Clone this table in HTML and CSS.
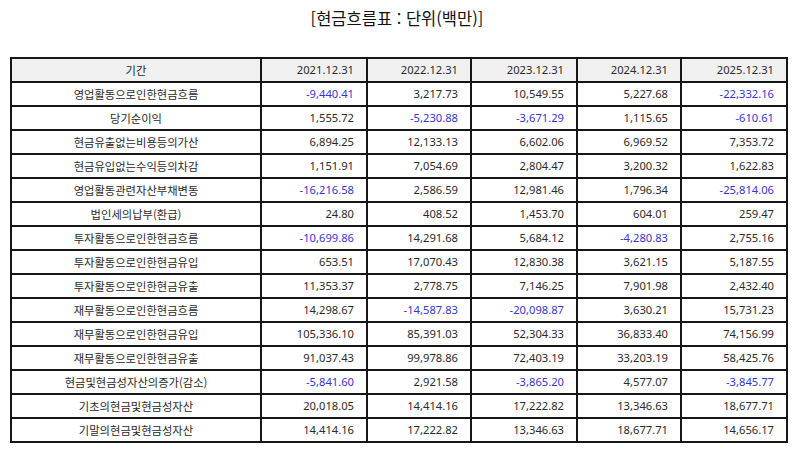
FILE: index.html
```html
<!DOCTYPE html>
<html lang="ko">
<head>
<meta charset="utf-8">
<title>현금흐름표</title>
<link rel="stylesheet" href="styles.css">
</head>
<body>
<h1 class="title">[현금흐름표 : 단위(백만)]</h1>
<table class="cf">
<colgroup>
<col class="c-label"><col class="c-num"><col class="c-num2"><col class="c-num"><col class="c-num2"><col class="c-num">
</colgroup>
<thead>
<tr><th>기간</th><th>2021.12.31</th><th>2022.12.31</th><th>2023.12.31</th><th>2024.12.31</th><th>2025.12.31</th></tr>
</thead>
<tbody>
<tr><td>영업활동으로인한현금흐름</td><td class="neg">-9,440.41</td><td>3,217.73</td><td>10,549.55</td><td>5,227.68</td><td class="neg">-22,332.16</td></tr>
<tr><td>당기순이익</td><td>1,555.72</td><td class="neg">-5,230.88</td><td class="neg">-3,671.29</td><td>1,115.65</td><td class="neg">-610.61</td></tr>
<tr><td>현금유출없는비용등의가산</td><td>6,894.25</td><td>12,133.13</td><td>6,602.06</td><td>6,969.52</td><td>7,353.72</td></tr>
<tr><td>현금유입없는수익등의차감</td><td>1,151.91</td><td>7,054.69</td><td>2,804.47</td><td>3,200.32</td><td>1,622.83</td></tr>
<tr><td>영업활동관련자산부채변동</td><td class="neg">-16,216.58</td><td>2,586.59</td><td>12,981.46</td><td>1,796.34</td><td class="neg">-25,814.06</td></tr>
<tr><td>법인세의납부(환급)</td><td>24.80</td><td>408.52</td><td>1,453.70</td><td>604.01</td><td>259.47</td></tr>
<tr><td>투자활동으로인한현금흐름</td><td class="neg">-10,699.86</td><td>14,291.68</td><td>5,684.12</td><td class="neg">-4,280.83</td><td>2,755.16</td></tr>
<tr><td>투자활동으로인한현금유입</td><td>653.51</td><td>17,070.43</td><td>12,830.38</td><td>3,621.15</td><td>5,187.55</td></tr>
<tr><td>투자활동으로인한현금유출</td><td>11,353.37</td><td>2,778.75</td><td>7,146.25</td><td>7,901.98</td><td>2,432.40</td></tr>
<tr><td>재무활동으로인한현금흐름</td><td>14,298.67</td><td class="neg">-14,587.83</td><td class="neg">-20,098.87</td><td>3,630.21</td><td>15,731.23</td></tr>
<tr><td>재무활동으로인한현금유입</td><td>105,336.10</td><td>85,391.03</td><td>52,304.33</td><td>36,833.40</td><td>74,156.99</td></tr>
<tr><td>재무활동으로인한현금유출</td><td>91,037.43</td><td>99,978.86</td><td>72,403.19</td><td>33,203.19</td><td>58,425.76</td></tr>
<tr><td>현금및현금성자산의증가(감소)</td><td class="neg">-5,841.60</td><td>2,921.58</td><td class="neg">-3,865.20</td><td>4,577.07</td><td class="neg">-3,845.77</td></tr>
<tr><td>기초의현금및현금성자산</td><td>20,018.05</td><td>14,414.16</td><td>17,222.82</td><td>13,346.63</td><td>18,677.71</td></tr>
<tr><td>기말의현금및현금성자산</td><td>14,414.16</td><td>17,222.82</td><td>13,346.63</td><td>18,677.71</td><td>14,656.17</td></tr>
</tbody>
</table>
</body>
</html>
```
FILE: styles.css
```css
html, body {
  margin: 0;
  padding: 0;
  background: #ffffff;
}
body {
  font-family: "Noto Sans", "Noto Sans CJK KR", sans-serif;
  color: #2a2a2a;
}
.title {
  margin: 0;
  padding-top: 6px;
  height: 52px;
  box-sizing: border-box;
  text-align: center;
  font-family: "Noto Sans CJK KR", sans-serif;
  font-weight: 400;
  font-size: 16.5px;
  line-height: 24px;
  color: #111111;
}
.cf {
  margin-left: 10px;
  margin-top: 5px;
  width: 776px;
  table-layout: fixed;
  border-collapse: collapse;
  font-size: 11.2px;
}
.c-label { width: 250px; }
.c-num { width: 106px; }
.c-num2 { width: 104px; }
.cf th, .cf td {
  border: 2px solid #161616;
  height: 22px;
  padding: 0 12px;
  line-height: 22px;
  font-weight: 400;
  white-space: nowrap;
  text-align: right;
}
.cf th {
  background: #f0f0f0;
}
.cf th:first-child, .cf td:first-child {
  text-align: center;
  font-family: "Noto Sans CJK KR", sans-serif;
  font-size: 11.3px;
}
.cf td.neg {
  color: #3535d0;
}
```
